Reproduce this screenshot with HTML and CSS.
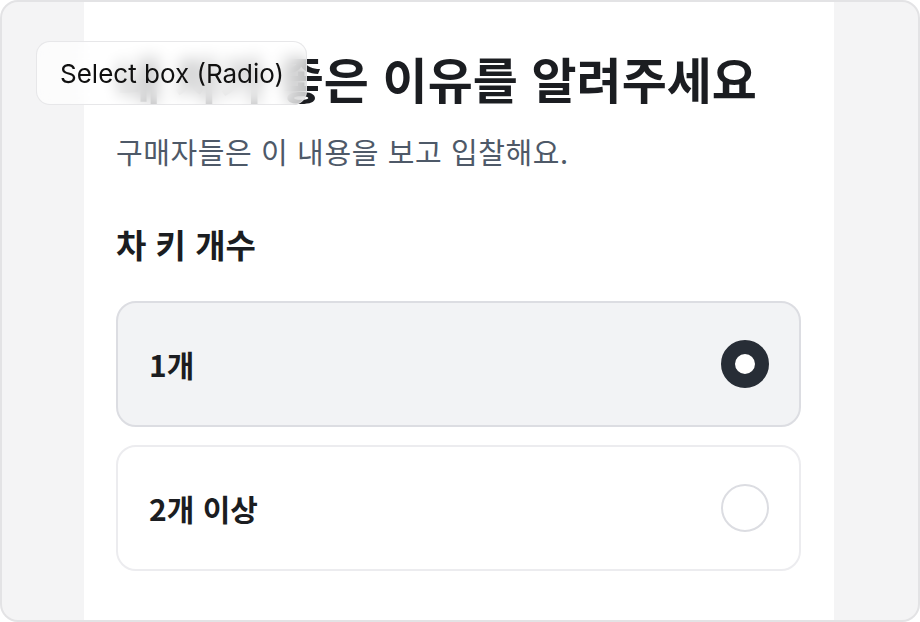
FILE: index.html
```html
<!DOCTYPE html>
<html lang="ko">
<head>
  <meta charset="utf-8">
  <link rel="stylesheet" href="styles.css">
</head>
<body>
  <div class="frame">
    <div class="panel">
      <h1 class="title">내 차가 좋은 이유를 알려주세요</h1>
      <p class="subtitle">구매자들은 이 내용을 보고 입찰해요.</p>

      <div class="field">
        <div class="label">차 키 개수</div>
        <div class="options">
          <label class="option selected">
            <span class="option-text">1개</span>
            <span class="radio"></span>
          </label>
          <label class="option">
            <span class="option-text">2개 이상</span>
            <span class="radio"></span>
          </label>
        </div>
      </div>
    </div>

    <div class="badge">Select box (Radio)</div>
  </div>
</body>
</html>
```

FILE: styles.css
```css
body {
  margin: 0;
  background-color: #ffffff;
  font-family: "Noto Sans CJK KR", "Noto Sans", sans-serif;
}

.frame {
  position: relative;
  box-sizing: border-box;
  width: 920px;
  height: 622px;
  border: 2px solid #e3e3e5;
  border-radius: 18px;
  background-color: #f4f4f5;
  overflow: hidden;
  display: flex;
}

.panel {
  box-sizing: border-box;
  width: 750px;
  margin-left: 82px;
  padding: 44px 33px 0 32px;
  background-color: #ffffff;
}

.title {
  margin: 0;
  font-size: 49px;
  font-weight: 700;
  line-height: 64px;
  color: #1b1d21;
  white-space: nowrap;
}

.subtitle {
  margin: 23px 0 0;
  font-size: 29px;
  line-height: 36px;
  letter-spacing: 0.6px;
  color: #4e5968;
}

.field {
  margin-top: 55px;
}

.label {
  font-size: 33px;
  font-weight: 700;
  line-height: 40px;
  color: #1b1d21;
}

.options {
  display: flex;
  flex-direction: column;
  gap: 18px;
  margin-top: 37px;
}

.option {
  box-sizing: border-box;
  height: 126px;
  display: flex;
  align-items: center;
  justify-content: space-between;
  padding: 0 30px 0 31px;
  border: 2px solid #ececef;
  border-radius: 20px;
  background-color: #ffffff;
}

.option.selected {
  border-color: #dcdde2;
  background-color: #f2f3f5;
}

.option-text {
  font-size: 30px;
  font-weight: 700;
  color: #1b1d21;
}

.radio {
  box-sizing: border-box;
  width: 48px;
  height: 48px;
  border: 2px solid #dcdde2;
  border-radius: 50%;
  background-color: #ffffff;
}

.option.selected .radio {
  border: 14px solid #272d36;
}

.badge {
  position: absolute;
  left: 34px;
  top: 39px;
  box-sizing: border-box;
  width: 271px;
  height: 64px;
  padding-left: 23px;
  display: flex;
  align-items: center;
  border: 1px solid rgba(225, 225, 228, 0.8);
  border-radius: 14px;
  background-color: rgba(255, 255, 255, 0.68);
  backdrop-filter: blur(8px);
  font-family: Inter, "Noto Sans", sans-serif;
  font-size: 26px;
  color: #111111;
}
```
